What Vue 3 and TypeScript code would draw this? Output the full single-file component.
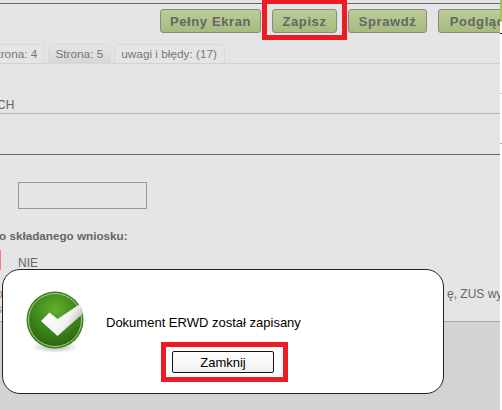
<script setup lang="ts">
const buttons = [
  { label: 'Pełny Ekran', width: 101 },
  { label: 'Zapisz', width: 65 },
  { label: 'Sprawdź', width: 79 },
  { label: 'Podgląd', width: 79 },
]
const tabs = ['Strona: 4', 'Strona: 5', 'uwagi i błędy: (17)']
</script>

<template>
  <div class="page">
    <div class="content">
      <div class="toolbar">
        <button v-for="b in buttons" :key="b.label" class="tool-btn" :style="{ width: b.width + 'px' }">{{ b.label }}</button>
      </div>
      <div class="tabs">
        <div v-for="(t, i) in tabs" :key="t" class="tab" :class="{ active: i === 1 }">{{ t }}</div>
      </div>
      <div class="section-title">CH</div>
      <div class="spacer"></div>
      <div class="field"><div class="input"></div></div>
      <div class="question">o składanego wniosku:</div>
      <div class="answer">
        <span class="flag"></span>
        <span>NIE</span>
      </div>
      <div class="long-row">
        <span class="cut">o</span>
        <span>ę, ZUS wypełni</span>
      </div>
      <div class="long-row second"><span class="cut">s</span></div>
    </div>

    <div class="edge">
      <div class="edge-green"></div>
      <div class="edge-mark one"></div>
      <div class="edge-mark two"></div>
      <div class="edge-mark three"></div>
    </div>
    <div class="mark mark-top"></div>

    <div class="modal">
      <div class="modal-body">
        <svg class="ok-icon" width="64" height="64" viewBox="0 0 64 64">
          <defs>
            <radialGradient id="ball" cx="50%" cy="30%" r="70%">
              <stop offset="0" stop-color="#62ae2c" />
              <stop offset="0.55" stop-color="#3f8a1e" />
              <stop offset="1" stop-color="#2c6410" />
            </radialGradient>
            <linearGradient id="tick" x1="0.15" y1="0.2" x2="1" y2="0.6">
              <stop offset="0" stop-color="#ffffff" />
              <stop offset="0.6" stop-color="#f2f2f2" />
              <stop offset="1" stop-color="#b5b5b5" />
            </linearGradient>
            <radialGradient id="shade">
              <stop offset="0" stop-color="#000" stop-opacity="0.3" />
              <stop offset="1" stop-color="#000" stop-opacity="0" />
            </radialGradient>
          </defs>
          <ellipse cx="31" cy="57" rx="24" ry="6" fill="url(#shade)" />
          <circle cx="31" cy="30" r="28.5" fill="#3c7f1c" />
          <circle cx="31" cy="30" r="26.5" fill="url(#ball)" stroke="#a9cf8f" stroke-width="1" />
          <path d="M 17 31 L 25.5 22.5 L 33.5 29 L 56 14 L 58.5 24 L 33.5 46 Z" fill="url(#tick)" />
        </svg>
        <span class="modal-text">Dokument ERWD został zapisany</span>
      </div>
      <div class="modal-actions">
        <button class="close-btn">Zamknij</button>
      </div>
    </div>

    <div class="mark mark-close"></div>
  </div>
</template>

<style scoped>
.page {
  position: relative;
  width: 502px;
  height: 410px;
  overflow: hidden;
  background: #d3d3d3;
  font-family: "Liberation Sans", Arial, sans-serif;
}

.content {
  height: 322px;
  box-sizing: border-box;
  background: #e5e5e5;
  padding-top: 3px;
  border-bottom: 1px solid #a8a8a8;
}

.toolbar {
  display: flex;
  gap: 11px;
  height: 30px;
  box-sizing: border-box;
  padding: 5px 0 0 160px;
  border-top: 1px solid #666;
}

.tool-btn {
  flex-shrink: 0;
  height: 24px;
  padding: 0;
  border: 1px solid #888;
  border-radius: 3px;
  background: linear-gradient(#bdcc96, #a6bb80);
  color: #666;
  font: bold 13px "Liberation Sans", Arial, sans-serif;
  letter-spacing: 0.6px;
  white-space: nowrap;
}

.tabs {
  display: flex;
  gap: 3px;
  height: 20px;
  box-sizing: border-box;
  margin-top: 11px;
  border-bottom: 1px solid #d2d2d2;
}

.tab {
  height: 19px;
  padding: 0 6.5px;
  line-height: 19px;
  border: 1px solid #dadada;
  border-bottom: none;
  border-radius: 3px 3px 0 0;
  color: #777;
  font-size: 11.8px;
  white-space: nowrap;
}

.tab:first-child {
  margin-left: -18px;
}

.tab.active {
  background: linear-gradient(#e5e5e5, #d6d6d6);
}

.section-title {
  height: 50px;
  box-sizing: border-box;
  padding-top: 34px;
  margin-left: -3px;
  color: #666;
  font-size: 12px;
  line-height: 14px;
  border-bottom: 1px solid #b5b5b5;
}

.spacer {
  height: 41px;
  box-sizing: border-box;
  border-bottom: 1px solid #666;
}

.field {
  padding: 27px 0 0 18px;
}

.input {
  width: 129px;
  height: 27px;
  box-sizing: border-box;
  border: 1px solid #999;
}

.question {
  margin-top: 20px;
  margin-left: -1px;
  color: #666;
  font-size: 11.7px;
  font-weight: bold;
  line-height: 14px;
}

.answer {
  display: flex;
  align-items: flex-end;
  height: 20px;
  margin-top: 7px;
  color: #666;
  font-size: 12px;
  line-height: 14px;
}

.flag {
  width: 1px;
  height: 20px;
  margin-right: 17px;
  background: #f08080;
}

.long-row {
  display: flex;
  justify-content: space-between;
  margin-top: 17px;
  width: 560px;
  color: #666;
  font-size: 12px;
  line-height: 14px;
  white-space: nowrap;
}

.long-row span:last-child:not(.cut) {
  width: 116px;
  margin-right: -3px;
}

.long-row.second {
  margin-top: 1px;
}

.cut {
  margin-left: -4px;
  color: #b08040;
}

.edge {
  position: absolute;
  top: 0;
  right: 0;
  bottom: 0;
  width: 2px;
  background: #fff;
}

.edge-green {
  height: 22px;
  background: #a6c44c;
}

.edge-mark {
  height: 1px;
}

.edge-mark.one {
  margin-top: 11px;
  background: #111;
}

.edge-mark.two {
  margin-top: 59px;
  background: #ccc;
}

.edge-mark.three {
  margin-top: 49px;
  background: #aaa;
}

.mark {
  position: absolute;
  box-sizing: border-box;
  border: 5px solid #ed1c24;
}

.mark-top {
  left: 262px;
  top: -1px;
  width: 85px;
  height: 41px;
}

.mark-close {
  left: 161px;
  top: 342px;
  width: 127px;
  height: 40px;
}

.modal {
  position: absolute;
  left: 2px;
  top: 269px;
  width: 442px;
  height: 125px;
  box-sizing: border-box;
  background: #fff;
  border: 1px solid #222;
  border-radius: 18px;
  display: flex;
  flex-direction: column;
}

.modal-body {
  display: flex;
  align-items: center;
  padding: 20px 0 0 21px;
  height: 64px;
}

.ok-icon {
  flex-shrink: 0;
}

.modal-text {
  margin-left: 18px;
  color: #000;
  font-size: 13px;
  white-space: nowrap;
}

.modal-actions {
  display: flex;
  padding: 0 0 0 169px;
  margin-top: -3px;
}

.close-btn {
  width: 102px;
  height: 22px;
  padding: 0;
  background: linear-gradient(#fff, #f0f0f0);
  border: 1px solid #111;
  border-radius: 2px;
  color: #000;
  font: 13px "Liberation Sans", Arial, sans-serif;
}
</style>
